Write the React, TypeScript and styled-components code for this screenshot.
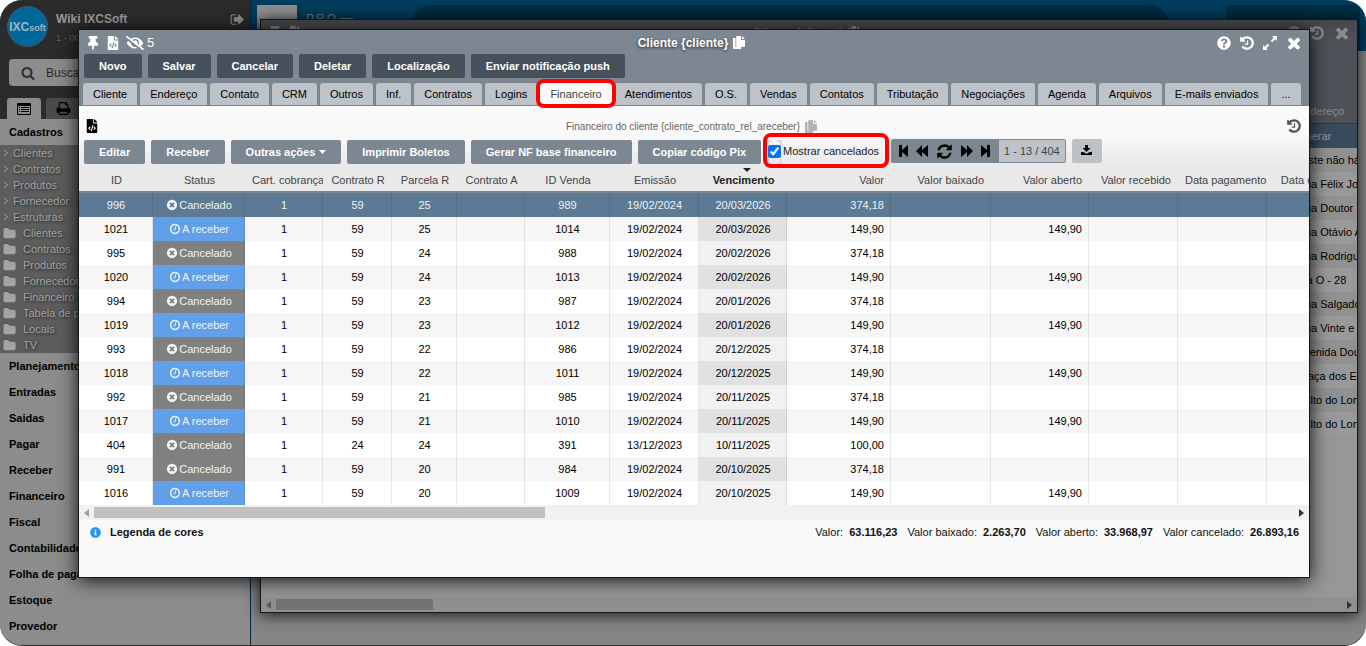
import React from "react";
import styled, { createGlobalStyle, css } from "styled-components";
import {
  FaThumbtack,
  FaFileCode,
  FaEyeSlash,
  FaQuestionCircle,
  FaInfoCircle,
} from "react-icons/fa";

const Global = createGlobalStyle`
  *, *::before, *::after { box-sizing: border-box; }
  html, body, #root { height: 100%; }
  body {
    margin: 0;
    background: #fff;
    font-family: "Liberation Sans", Arial, sans-serif;
    font-size: 11px;
    overflow: hidden;
  }
  button, input { font: inherit; color: inherit; }
  button { border: 0; padding: 0; background: none; cursor: pointer; }
  ul { list-style: none; margin: 0; padding: 0; }
  svg { display: block; flex: none; }
`;

/* ---------- icons ---------- */

const paths = {
  times:
    "M1490 1322q0 40-28 68l-136 136q-28 28-68 28t-68-28l-294-294-294 294q-28 28-68 28t-68-28l-136-136q-28-28-28-68t28-68l294-294-294-294q-28-28-28-68t28-68l136-136q28-28 68-28t68 28l294 294 294-294q28-28 68-28t68 28l136 136q28 28 28 68t-28 68l-294 294 294 294q28 28 28 68z",
  timesCircle:
    "M1277 1122q0-26-19-45l-181-181 181-181q19-19 19-45 0-27-19-46l-90-90q-19-19-46-19-26 0-45 19l-181 181-181-181q-19-19-45-19-27 0-46 19l-90 90q-19 19-19 46 0 26 19 45l181 181-181 181q-19 19-19 45 0 27 19 46l90 90q19 19 46 19 26 0 45-19l181-181 181 181q19 19 45 19 27 0 46-19l90-90q19-19 19-46zm387-226q0 209-103 385.5t-279.5 279.5-385.5 103-385.5-103-279.5-279.5-103-385.5 103-385.5 279.5-279.5 385.5-103 385.5 103 279.5 279.5 103 385.5z",
  clock:
    "M1024 544v448q0 14-9 23t-23 9h-320q-14 0-23-9t-9-23v-64q0-14 9-23t23-9h224v-352q0-14 9-23t23-9h64q14 0 23 9t9 23zm416 352q0-148-73-273t-198-198-273-73-273 73-198 198-73 273 73 273 198 198 273 73 273-73 198-198 73-273zm224 0q0 209-103 385.5t-279.5 279.5-385.5 103-385.5-103-279.5-279.5-103-385.5 103-385.5 279.5-279.5 385.5-103 385.5 103 279.5 279.5 103 385.5z",
  history:
    "M1664 896q0 156-61 298t-164 245-245 164-298 61q-172 0-327-72.5t-264-204.5q-7-10-6.5-22.5t8.5-20.5l137-138q10-9 25-9 16 2 23 12 73 95 179 147t225 52q104 0 198.5-40.5t163.5-109.5 109.5-163.5 40.5-198.5-40.5-198.5-109.5-163.5-163.5-109.5-198.5-40.5q-98 0-188 35.5t-160 101.5l137 138q31 30 14 69-17 40-59 40h-448q-26 0-45-19t-19-45v-448q0-42 40-59 39-17 69 14l130 129q107-101 244.5-156.5t284.5-55.5q156 0 298 61t245 164 164 245 61 298zm-640-288v448q0 14-9 23t-23 9h-320q-14 0-23-9t-9-23v-64q0-14 9-23t23-9h224v-352q0-14 9-23t23-9h64q14 0 23 9t9 23z",
  refresh:
    "M1639 1056q0 5-1 7-64 268-268 434.5t-478 166.5q-146 0-282.5-55t-243.5-157l-129 129q-19 19-45 19t-45-19-19-45v-448q0-26 19-45t45-19h448q26 0 45 19t19 45-19 45l-137 137q71 66 161 102t187 36q134 0 250-65t186-179q11-17 53-117 8-23 30-23h192q13 0 22.5 9.5t9.5 22.5zm25-800v448q0 26-19 45t-45 19h-448q-26 0-45-19t-19-45 19-45l138-138q-148-137-349-137-134 0-250 65t-186 179q-11 17-53 117-8 23-30 23h-199q-13 0-22.5-9.5t-9.5-22.5v-7q65-268 270-434.5t480-166.5q146 0 284 55.5t245 156.5l130-129q19-19 45-19t45 19 19 45z",
  print:
    "M448 1536h896v-256h-896v256zm0-640h896v-384h-160q-40 0-68-28t-28-68v-160h-640v640zm1152 64q0-26-19-45t-45-19-45 19-19 45 19 45 45 19 45-19 19-45zm128 0v416q0 13-9.5 22.5t-22.5 9.5h-224v160q0 40-28 68t-68 28h-960q-40 0-68-28t-28-68v-160h-224q-13 0-22.5-9.5t-9.5-22.5v-416q0-79 56.5-135.5t135.5-56.5h64v-544q0-40 28-68t68-28h672q40 0 88 20t76 48l152 152q28 28 48 76t20 88v256h64q79 0 135.5 56.5t56.5 135.5z",
  search:
    "M1216 832q0-185-131.5-316.5t-316.5-131.5-316.5 131.5-131.5 316.5 131.5 316.5 316.5 131.5 316.5-131.5 131.5-316.5zm512 832q0 52-38 90t-90 38q-54 0-90-38l-343-342q-179 124-399 124-143 0-273.5-55.5t-225-150-150-225-55.5-273.5 55.5-273.5 150-225 225-150 273.5-55.5 273.5 55.5 225 150 150 225 55.5 273.5q0 220-124 399l343 343q37 37 37 90z",
  folder:
    "M1728 608v704q0 92-66 158t-158 66h-1216q-92 0-158-66t-66-158v-960q0-92 66-158t158-66h320q92 0 158 66t66 158v32h672q92 0 158 66t66 158z",
  signOut:
    "M704 1440q0 4 1 20t.5 26.5-3 23.5-10 19.5-20.5 6.5h-320q-119 0-203.5-84.5t-84.5-203.5v-704q0-119 84.5-203.5t203.5-84.5h320q13 0 22.5 9.5t9.5 22.5q0 4 1 20t.5 26.5-3 23.5-10 19.5-20.5 6.5h-320q-66 0-113 47t-47 113v704q0 66 47 113t113 47h312l11.5 1 11.5 3 8 5.5 7 9 2 13.5zm928-544q0 26-19 45l-544 544q-19 19-45 19t-45-19-19-45v-288h-448q-26 0-45-19t-19-45v-384q0-26 19-45t45-19h448v-288q0-26 19-45t45-19 45 19l544 544q19 19 19 45z",
};

const Icon = ({ name, size = 14 }: { name: keyof typeof paths; size?: number }) => (
  <svg width={size} height={size} viewBox="0 0 1792 1792" fill="currentColor" aria-hidden>
    <path d={paths[name]} />
  </svg>
);

const ListIcon = () => (
  <svg width="14" height="12" viewBox="0 0 14 12" fill="currentColor" aria-hidden>
    <path fillRule="evenodd" d="M1 0h12a1 1 0 0 1 1 1v10a1 1 0 0 1-1 1H1a1 1 0 0 1-1-1V1a1 1 0 0 1 1-1zm0 3v8h12V3z" />
    <path d="M2 4h1v1H2zM4 4h8v1H4zM2 6h1v1H2zM4 6h8v1H4zM2 8h1v1H2zM4 8h8v1H4z" />
  </svg>
);

const ChevronIcon = () => (
  <svg width="6" height="8" viewBox="0 0 6 8" fill="none" stroke="currentColor" aria-hidden>
    <path d="M1 1l3.500 3L1 7" />
  </svg>
);

const CaretIcon = () => (
  <svg width="7" height="4" viewBox="0 0 7 4" fill="currentColor" aria-hidden>
    <path d="M0 0h7L3.500 4z" />
  </svg>
);

const ExpandIcon = () => (
  <svg width="14" height="14" viewBox="0 0 14 14" aria-hidden>
    <path d="M8.500 5.500 12 2M5.500 8.500 2 12" stroke="currentColor" strokeWidth="2" />
    <path d="M9 0h5v5zM0 9v5h5z" fill="currentColor" />
  </svg>
);

const PagesIcon = ({ size }: { size: number }) => (
  <svg width={size} height={size + 1} viewBox="0 0 12 13" fill="currentColor" aria-hidden>
    <path d="M0 2h2.500v9H8v2H1a1 1 0 0 1-1-1z" />
    <path d="M3.200 1a1 1 0 0 1 1-1H8v4h4v6a1 1 0 0 1-1 1H4.200a1 1 0 0 1-1-1zM9 0l3 3H9z" />
  </svg>
);

const StepIcon = ({ flip }: { flip?: boolean }) => (
  <svg width="10" height="12" viewBox="0 0 10 12" fill="currentColor" aria-hidden>
    {flip ? <path d="M0 0l6 5V0h3v12H6V7l-6 5z" /> : <path d="M10 0 4 5V0H1v12h3V7l6 5z" />}
  </svg>
);

const FastIcon = ({ flip }: { flip?: boolean }) => (
  <svg width="14" height="12" viewBox="0 0 14 12" fill="currentColor" aria-hidden>
    {flip ? <path d="M1 0l6 5V0l6 6-6 6V7l-6 5z" /> : <path d="M13 0 7 5V0L1 6l6 6V7l6 5z" />}
  </svg>
);

const DownloadIcon = () => (
  <svg width="11" height="10" viewBox="0 0 11 10" fill="currentColor" aria-hidden>
    <path d="M4 0h3v3h2.500L5.500 7 1.500 3H4z" />
    <path d="M0 7h2.500l3 2 3-2H11v3H0z" />
  </svg>
);

/* ---------- page shell and sidebar ---------- */

const Shell = styled.div`
  position: relative;
  display: flex;
  height: 100%;
  overflow: hidden;
  border-radius: 22px;
  border-bottom: 1px solid #2e2e2e;
  background: #858585;
`;

const Sidebar = styled.aside`
  flex: 0 0 251px;
  border-right: 1px solid #002b40;
  background: #8c8c8c;
  color: #000;
`;

const SideHeader = styled.header`
  display: flex;
  flex-direction: column;
  height: 119px;
  background: #2b2b2b;
`;

const UserRow = styled.div`
  display: flex;
  height: 54px;
  padding: 6px 5px 0 7px;
`;

const LogoBadge = styled.div`
  display: flex;
  align-items: center;
  justify-content: center;
  flex: none;
  width: 41px;
  height: 41px;
  margin-right: 8px;
  border: 1px solid #46545c;
  border-radius: 50%;
  background: #00679b;
  color: #a5b5bd;
  font-weight: 700;
`;

const LogoMain = styled.span`
  font-size: 12px;
`;

const LogoSmall = styled.span`
  padding-top: 3px;
  font-size: 9px;
`;

const UserText = styled.div`
  flex: 1;
  padding-top: 5px;
  color: #606060;
  font-size: 9px;
  line-height: 16px;
`;

const UserName = styled.div`
  margin-bottom: 3px;
  color: #9a9a9a;
  font-size: 12px;
  font-weight: 700;
`;

const LogoutButton = styled.button`
  align-self: flex-start;
  padding-top: 6px;
  color: #8c8c8c;
`;

const SearchBox = styled.label`
  display: flex;
  align-items: center;
  gap: 11px;
  height: 27px;
  margin: 5px 9px 12px;
  padding: 0 12px;
  border-radius: 4px;
  background: #8c8c8c;
  color: #2b2b2b;
`;

const SearchInput = styled.input`
  width: 100%;
  min-width: 0;
  padding: 0;
  border: 0;
  outline: 0;
  background: none;
  font-size: 12px;
  &::placeholder {
    color: #2b2b2b;
    opacity: 1;
  }
`;

const SideTabs = styled.div`
  display: flex;
  gap: 5px;
  padding-left: 7px;
`;

const SideTab = styled.button<{ $active?: boolean }>`
  display: flex;
  align-items: center;
  justify-content: center;
  width: 34px;
  height: 21px;
  border-radius: 3px 3px 0 0;
  background: ${(p) => (p.$active ? "#8c8c8c" : "#4b4b4b")};
  color: #000;
`;

const SectionTitle = styled.button`
  display: block;
  width: 100%;
  height: 26px;
  padding-left: 9px;
  font-weight: 700;
  text-align: left;
  white-space: nowrap;
`;

const SubList = styled.ul`
  background: #5d5d5d;
`;

const SubLink = styled.a<{ $folder?: boolean }>`
  display: flex;
  align-items: center;
  gap: ${(p) => (p.$folder ? "7px" : "4px")};
  height: 16px;
  padding-left: 3px;
  color: #a3a3a3;
  text-decoration: none;
  text-shadow: 1px 1px 3px #222;
`;

const Workspace = styled.div`
  flex: 1;
  min-width: 0;
`;

const TopBar = styled.div`
  display: flex;
  height: 51px;
  padding: 5px 6px 0 6px;
  background: #003d5c;
`;

const CompanyThumb = styled.div`
  width: 40px;
  background: #8f8f8f;
`;

const CompanyName = styled.div`
  display: flex;
  gap: 2px;
  width: 113px;
  padding: 7px 0 0 9px;
  color: #6b7c88;
  font-size: 12px;
`;

const NameDash = styled.span`
  width: 13px;
  height: 7px;
  margin-left: 2px;
  border-bottom: 1px solid currentColor;
`;

const TopPill = styled.div`
  flex: 1;
  border-radius: 22px 22px 0 0;
  background: #002d43;
`;

const TopPanel = styled.div`
  width: 134px;
  margin-left: 56px;
  border-radius: 5px 5px 0 0;
  background: #002d43;
`;

/* ---------- windows ---------- */

const WindowBox = styled.section<{ $back?: boolean }>`
  position: absolute;
  border: 1px solid #141618;
  overflow: hidden;
  ${(p) =>
    p.$back
      ? css`
          top: 19px;
          right: 8px;
          left: 260px;
          background: #979797;
          box-shadow: 0 2px 14px rgba(0, 0, 0, 0.8);
        `
      : css`
          top: 29px;
          right: 56px;
          left: 78px;
          background: #f9f9f9;
          box-shadow: 0 2px 18px rgba(0, 0, 0, 0.9);
        `}
`;

const BackHead = styled.div`
  height: 104px;
  border-bottom: 1px solid #33373b;
  background: linear-gradient(#45474b, #4e5258 20px);
  color: #8b8b8b;
`;

const BackHeadLabel = styled.div`
  width: 60px;
  margin-left: auto;
  padding-top: 61px;
`;

const TitleBar = styled.div<{ $dim?: boolean }>`
  display: grid;
  grid-template-columns: 1fr auto 1fr;
  align-items: center;
  height: 24px;
  padding: 1px 6px 0 7px;
  color: ${(p) => (p.$dim ? "#8b8b8b" : "#fff")};
`;

const TitleLeft = styled.div`
  display: flex;
  align-items: center;
  gap: 6px;
  font-size: 13px;
`;

const TitleText = styled.h1`
  display: flex;
  align-items: center;
  gap: 5px;
  margin: 0;
  padding-right: 6px;
  font-size: 12px;
  font-weight: 700;
  text-shadow: 0 1px 3px #222;
`;

const TitleRight = styled.div`
  display: flex;
  align-items: center;
  justify-content: flex-end;
  gap: 8px;
`;

const IconButton = styled.button`
  display: flex;
  align-items: center;
  justify-content: center;
  gap: 3px;
`;

const BackTable = styled.table`
  width: 100%;
  border-collapse: collapse;
  table-layout: fixed;
  td {
    height: 24px;
    padding: 0;
    overflow: hidden;
    white-space: nowrap;
  }
  td:last-child { width: 60px; }
  tr:nth-child(odd) { background: #999; }
  tr:nth-child(even) { background: #919191; }
  tr:first-child { background: #384b5d; color: #999; }
`;

const BackBody = styled.div`
  height: 473px;
`;

const WindowHead = styled.header`
  background: #7d8791;
`;

const ButtonRow = styled.div`
  display: flex;
  gap: 6px;
  padding: 0 5px 5px;
`;

const ActionButton = styled.button<{ $dark?: boolean }>`
  display: flex;
  align-items: center;
  gap: 4px;
  height: 24px;
  padding: 0 15px;
  border-radius: 2px;
  background: ${(p) => (p.$dark ? "#46505b" : "#7d8791")};
  color: #fff;
  font-weight: 700;
  white-space: nowrap;
`;

const TabRow = styled.nav`
  display: flex;
  gap: 3px;
  padding: 0 8px 0 4px;
  border-bottom: 1px solid #747f90;
`;

const Tab = styled.button<{ $active?: boolean }>`
  position: relative;
  height: 22px;
  padding: 0 10px;
  border-radius: 3px 3px 0 0;
  background: ${(p) => (p.$active ? "#f9f9f9" : "#bec2c9")};
  color: ${(p) => (p.$active ? "#444" : "#000")};
  white-space: nowrap;
`;

const Highlight = styled.span<{ $inset: string }>`
  position: absolute;
  z-index: 1;
  inset: ${(p) => p.$inset};
  border: 4px solid #f00;
  border-radius: 8px;
  pointer-events: none;
`;

const GridTop = styled.div`
  background: linear-gradient(#fafafa 25px, #e9e9e9 60px);
`;

const SubTitleBar = styled.div`
  display: grid;
  grid-template-columns: 1fr auto 1fr;
  align-items: center;
  height: 33px;
  padding: 7px 7px 0 6px;
`;

const SubTitle = styled.h2`
  display: flex;
  align-items: center;
  gap: 5px;
  margin: 0;
  padding-right: 4px;
  color: #666;
  font-size: 10px;
  font-weight: 400;
`;

const CopyMark = styled.span`
  color: #b4b4b4;
`;

const HistoryButton = styled.button`
  justify-self: end;
  color: #555;
`;

const Toolbar = styled.div`
  display: flex;
  gap: 5px;
  padding: 1px 5px 4px;
`;

const RecordActions = styled.div`
  display: flex;
  gap: 6px;
`;

const CheckLabel = styled.label`
  position: relative;
  display: flex;
  align-items: center;
  gap: 2px;
  padding: 0 7px 2px 2px;
  color: #222;
  white-space: nowrap;
`;

const FocusMarks = styled.svg`
  position: absolute;
  top: 0;
  left: 1px;
`;

const CheckInput = styled.input`
  position: relative;
  width: 13px;
  height: 13px;
  margin: 0;
  accent-color: #0075ff;
`;

const Pager = styled.div`
  display: flex;
  height: 24px;
  margin-top: -1px;
  border: 1px solid #7d8791;
  border-radius: 2px;
  background: #7d8791;
`;

const PagerButtons = styled.div`
  display: flex;
  align-items: center;
  gap: 7px;
  padding: 0 8px 0 6px;
  color: #000;
`;

const PageCount = styled.span`
  padding: 0 5px;
  background: #bec2c9;
  color: #444;
  line-height: 22px;
  white-space: nowrap;
`;

const DownloadButton = styled.button`
  display: flex;
  align-items: center;
  justify-content: center;
  width: 30px;
  height: 24px;
  margin: -1px 0 0 1px;
  padding-bottom: 3px;
  border-radius: 2px;
  background: #bdc2c6;
  color: #000;
`;

const TableClip = styled.div`
  overflow: hidden;
`;

const DataTable = styled.table`
  width: 100%;
  min-width: 1274px;
  border-collapse: separate;
  border-spacing: 0;
  table-layout: fixed;
`;

type Align = "left" | "center" | "right";

const headPadding = { left: "0 0 0 7px", center: "0 6px 0 7px", right: "0 7px" };

const HeadCell = styled.th<{ $align: Align; $sorted?: boolean }>`
  position: relative;
  height: 25px;
  padding: ${(p) => headPadding[p.$align]};
  overflow: hidden;
  border-bottom: 2px solid #7d8791;
  background: #e9e9e9;
  color: ${(p) => (p.$sorted ? "#222" : "#444")};
  font-weight: ${(p) => (p.$sorted ? 700 : 400)};
  text-align: ${(p) => p.$align};
  white-space: nowrap;
`;

const SortMark = styled.span`
  position: absolute;
  top: 0;
  left: 50%;
  border: 4px solid transparent;
  border-top-color: #222;
`;

const Row = styled.tr<{ $selected?: boolean }>`
  background: #fff;
  color: #000;
  &:nth-child(even) { background: #f6f6f6; }
  ${(p) =>
    p.$selected &&
    css`
      && { background: #5d7a95; }
      color: #eef2f6;
    `}
`;

const Cell = styled.td<{ $align: Align; $fill?: string }>`
  height: 24px;
  padding: 0 ${(p) => (p.$align === "right" ? "6px" : "5px")} 0 6px;
  border-right: 1px solid rgba(0, 0, 0, 0.09);
  text-align: ${(p) => p.$align};
  white-space: nowrap;
  ${(p) => p.$fill && css`background: ${p.$fill};`}
`;

const Status = styled.span`
  display: flex;
  align-items: center;
  justify-content: center;
  gap: 1px;
  color: #f2f2f2;
`;

const ScrollTrack = styled.div<{ $dim?: boolean }>`
  display: flex;
  align-items: center;
  height: 15px;
  padding: 0 5px;
  background: ${(p) => (p.$dim ? "#909090" : "#f1f1f1")};
  color: ${(p) => (p.$dim ? "#5a5a5a" : "#a0a0a0")};
`;

const ScrollThumb = styled.div<{ $dim?: boolean }>`
  width: ${(p) => (p.$dim ? "14.5%" : "37%")};
  height: 11px;
  margin: 0 auto 0 5px;
  background: ${(p) => (p.$dim ? "#737373" : "#c1c1c1")};
`;

const Arrow = styled.span<{ $left?: boolean }>`
  border: 4px solid transparent;
  ${(p) =>
    p.$left
      ? css`
          border-left-width: 0;
          border-right: 5px solid currentColor;
        `
      : css`
          border-right-width: 0;
          border-left: 5px solid #333;
        `}
`;

const WindowFoot = styled.footer`
  display: flex;
  justify-content: space-between;
  padding: 5px 10px 37px 11px;
  color: #111;
  line-height: 15px;
`;

const Legend = styled.div`
  display: flex;
  align-items: center;
  gap: 9px;
  font-weight: 700;
`;

const BlueMark = styled.span`
  color: #2196f3;
`;

const Totals = styled.div`
  display: flex;
  gap: 10px;
`;

const Total = styled.span`
  display: flex;
  gap: 6px;
`;

/* ---------- data ---------- */

const angleItems = ["Clientes", "Contratos", "Produtos", "Fornecedor", "Estruturas"];
const folderItems = ["Clientes", "Contratos", "Produtos", "Fornecedor", "Financeiro", "Tabela de preços", "Locais", "TV"];
const sections = ["Planejamento", "Entradas", "Saidas", "Pagar", "Receber", "Financeiro", "Fiscal", "Contabilidade", "Folha de pagamento", "Estoque", "Provedor"];

const addresses = ["Liberar", "Teste não há", "Rua Félix José", "Rua Doutor", "Rua Otávio Alves", "Rua Rodrigues", "Via O - 28", "Rua Salgado", "Rua Vinte e", "Avenida Doutor", "Praça dos Estados", "Salto do Lontra", "Salto do Lontra"];

const actions = ["Novo", "Salvar", "Cancelar", "Deletar", "Localização", "Enviar notificação push"];

const tabs = ["Cliente", "Endereço", "Contato", "CRM", "Outros", "Inf.", "Contratos", "Logins", "Financeiro", "Atendimentos", "O.S.", "Vendas", "Contatos", "Tributação", "Negociações", "Agenda", "Arquivos", "E-mails enviados", "..."];

const columns: { label: string; width: number; head?: Align; cell?: Align }[] = [
  { label: "ID", width: 74 },
  { label: "Status", width: 92 },
  { label: "Cart. cobrança", width: 78, head: "left" },
  { label: "Contrato R", width: 69 },
  { label: "Parcela R", width: 65 },
  { label: "Contrato A", width: 68 },
  { label: "ID Venda", width: 85 },
  { label: "Emissão", width: 89 },
  { label: "Vencimento", width: 88 },
  { label: "Valor", width: 104, head: "right", cell: "right" },
  { label: "Valor baixado", width: 100, head: "right", cell: "right" },
  { label: "Valor aberto", width: 98, head: "right", cell: "right" },
  { label: "Valor recebido", width: 89, head: "right", cell: "right" },
  { label: "Data pagamento", width: 89 },
  { label: "Data crédito", width: 86 },
];

type Entry = [id: string, open: boolean, contract: string, part: string, sale: string, issued: string, due: string, value: string];

const entries: Entry[] = [
  ["996", false, "59", "25", "989", "19/02/2024", "20/03/2026", "374,18"],
  ["1021", true, "59", "25", "1014", "19/02/2024", "20/03/2026", "149,90"],
  ["995", false, "59", "24", "988", "19/02/2024", "20/02/2026", "374,18"],
  ["1020", true, "59", "24", "1013", "19/02/2024", "20/02/2026", "149,90"],
  ["994", false, "59", "23", "987", "19/02/2024", "20/01/2026", "374,18"],
  ["1019", true, "59", "23", "1012", "19/02/2024", "20/01/2026", "149,90"],
  ["993", false, "59", "22", "986", "19/02/2024", "20/12/2025", "374,18"],
  ["1018", true, "59", "22", "1011", "19/02/2024", "20/12/2025", "149,90"],
  ["992", false, "59", "21", "985", "19/02/2024", "20/11/2025", "374,18"],
  ["1017", true, "59", "21", "1010", "19/02/2024", "20/11/2025", "149,90"],
  ["404", false, "24", "24", "391", "13/12/2023", "10/11/2025", "100,00"],
  ["991", false, "59", "20", "984", "19/02/2024", "20/10/2025", "374,18"],
  ["1016", true, "59", "20", "1009", "19/02/2024", "20/10/2025", "149,90"],
];

const totals = [
  ["Valor:", "63.116,23"],
  ["Valor baixado:", "2.263,70"],
  ["Valor aberto:", "33.968,97"],
  ["Valor cancelado:", "26.893,16"],
];

/* ---------- components ---------- */

const MainMenu = () => (
  <Sidebar>
    <SideHeader>
      <UserRow>
        <LogoBadge>
          <LogoMain>IXC</LogoMain>
          <LogoSmall>soft</LogoSmall>
        </LogoBadge>
        <UserText>
          <UserName>Wiki IXCSoft</UserName>
          1 - IXCSoft
        </UserText>
        <LogoutButton aria-label="Sair">
          <Icon name="signOut" size={15} />
        </LogoutButton>
      </UserRow>
      <SearchBox>
        <Icon name="search" size={14} />
        <SearchInput placeholder="Buscar" aria-label="Buscar" />
      </SearchBox>
      <SideTabs>
        <SideTab $active aria-label="Menu"><ListIcon /></SideTab>
        <SideTab aria-label="Relatórios"><Icon name="print" size={15} /></SideTab>
      </SideTabs>
    </SideHeader>
    <SectionTitle>Cadastros</SectionTitle>
    <SubList>
      {angleItems.map((t) => (
        <li key={t}><SubLink href="#"><ChevronIcon />{t}</SubLink></li>
      ))}
      {folderItems.map((t) => (
        <li key={t}><SubLink href="#" $folder><Icon name="folder" size={13} />{t}</SubLink></li>
      ))}
    </SubList>
    {sections.map((t) => <SectionTitle key={t}>{t}</SectionTitle>)}
  </Sidebar>
);

const BackWindow = () => (
  <WindowBox $back>
    <BackHead>
      <TitleBar $dim>
        <TitleLeft>
          <FaThumbtack size={14} />
          <FaFileCode size={14} />
        </TitleLeft>
        <TitleText>Cliente {"{cliente}"} <PagesIcon size={12} /></TitleText>
        <TitleRight>
          <FaQuestionCircle size={14} />
          <Icon name="history" size={16} />
          <Icon name="times" size={18} />
        </TitleRight>
      </TitleBar>
      <BackHeadLabel>Endereço</BackHeadLabel>
    </BackHead>
    <BackBody>
      <BackTable>
        <tbody>
          {addresses.map((a, i) => <tr key={i}><td /><td>{a}</td></tr>)}
        </tbody>
      </BackTable>
    </BackBody>
    <ScrollTrack $dim><Arrow $left /><ScrollThumb $dim /><Arrow /></ScrollTrack>
  </WindowBox>
);

const FinanceTable = () => (
  <TableClip>
    <DataTable>
      <colgroup>
        {columns.map((c) => <col key={c.label} width={c.width} />)}
      </colgroup>
      <thead>
        <tr>
          {columns.map((c) => (
            <HeadCell key={c.label} $align={c.head || "center"} $sorted={c.label === "Vencimento"}>
              {c.label === "Vencimento" && <SortMark />}
              {c.label}
            </HeadCell>
          ))}
        </tr>
      </thead>
      <tbody>
        {entries.map(([id, open, contract, part, sale, issued, due, value], r) => {
          const selected = r === 0;
          const cells: React.ReactNode[] = [
            id,
            <Status><Icon name={open ? "clock" : "timesCircle"} size={12} />{open ? "A receber" : "Cancelado"}</Status>,
            "1", contract, part, "", sale, issued, due, value, "", open ? value : "", "", "", "",
          ];
          return (
            <Row key={id} $selected={selected}>
              {cells.map((content, c) => {
                let fill: string | undefined;
                if (!selected && c === 1) fill = open ? "#629fe9" : "#808080";
                if (!selected && c === 8) fill = r % 2 ? "#e1e1e1" : "#f1f1f1";
                return (
                  <Cell key={c} $align={columns[c].cell || "center"} $fill={fill}>{content}</Cell>
                );
              })}
            </Row>
          );
        })}
      </tbody>
    </DataTable>
  </TableClip>
);

const ClientWindow = () => (
  <WindowBox>
    <WindowHead>
      <TitleBar>
        <TitleLeft>
          <IconButton aria-label="Fixar"><FaThumbtack size={14} /></IconButton>
          <IconButton aria-label="Código"><FaFileCode size={14} /></IconButton>
          <IconButton aria-label="Campos ocultos"><FaEyeSlash size={18} />5</IconButton>
        </TitleLeft>
        <TitleText>Cliente {"{cliente}"} <PagesIcon size={12} /></TitleText>
        <TitleRight>
          <IconButton aria-label="Ajuda"><FaQuestionCircle size={14} /></IconButton>
          <IconButton aria-label="Histórico"><Icon name="history" size={16} /></IconButton>
          <IconButton aria-label="Expandir"><ExpandIcon /></IconButton>
          <IconButton aria-label="Fechar"><Icon name="times" size={18} /></IconButton>
        </TitleRight>
      </TitleBar>
      <ButtonRow>
        {actions.map((a) => <ActionButton $dark key={a}>{a}</ActionButton>)}
      </ButtonRow>
      <TabRow>
        {tabs.map((t) => (
          <Tab key={t} $active={t === "Financeiro"}>
            {t}
            {t === "Financeiro" && <Highlight $inset="-4px -4px -3px" />}
          </Tab>
        ))}
      </TabRow>
    </WindowHead>
    <GridTop>
      <SubTitleBar>
        <FaFileCode size={14} />
        <SubTitle>
          Financeiro do cliente {"{cliente_contrato_rel_areceber}"}
          <CopyMark><PagesIcon size={12} /></CopyMark>
        </SubTitle>
        <HistoryButton aria-label="Histórico do registro"><Icon name="history" size={16} /></HistoryButton>
      </SubTitleBar>
      <Toolbar>
        <RecordActions>
          <ActionButton>Editar</ActionButton>
          <ActionButton>Receber</ActionButton>
          <ActionButton>Outras ações <CaretIcon /></ActionButton>
          <ActionButton>Imprimir Boletos</ActionButton>
          <ActionButton>Gerar NF base financeiro</ActionButton>
          <ActionButton>Copiar código Pix</ActionButton>
        </RecordActions>
        <CheckLabel>
          <FocusMarks width="15" height="24" viewBox="0 0 15 24" fill="none" stroke="#d3dae0" strokeWidth="2" aria-hidden>
            <path d="M1 5V1h4M10 1h4v4M1 19v4h4M10 23h4v-4" />
          </FocusMarks>
          <CheckInput type="checkbox" defaultChecked />
          Mostrar cancelados
          <Highlight $inset="-7px -3px -4px" />
        </CheckLabel>
        <Pager>
          <PagerButtons>
            <IconButton aria-label="Primeira página"><StepIcon /></IconButton>
            <IconButton aria-label="Página anterior"><FastIcon /></IconButton>
            <IconButton aria-label="Atualizar"><Icon name="refresh" size={17} /></IconButton>
            <IconButton aria-label="Próxima página"><FastIcon flip /></IconButton>
            <IconButton aria-label="Última página"><StepIcon flip /></IconButton>
          </PagerButtons>
          <PageCount>1 - 13 / 404</PageCount>
        </Pager>
        <DownloadButton aria-label="Exportar"><DownloadIcon /></DownloadButton>
      </Toolbar>
    </GridTop>
    <FinanceTable />
    <ScrollTrack><Arrow $left /><ScrollThumb /><Arrow /></ScrollTrack>
    <WindowFoot>
      <Legend><BlueMark><FaInfoCircle size={11} /></BlueMark>Legenda de cores</Legend>
      <Totals>
        {totals.map(([label, value]) => (
          <Total key={label}>{label} <b>{value}</b></Total>
        ))}
      </Totals>
    </WindowFoot>
  </WindowBox>
);

export default function App() {
  return (
    <>
      <Global />
      <Shell>
        <MainMenu />
        <Workspace>
          <TopBar>
            <CompanyThumb />
            <CompanyName><span>P</span><span>R</span><span>O</span><NameDash /></CompanyName>
            <TopPill />
            <TopPanel />
          </TopBar>
        </Workspace>
        <BackWindow />
        <ClientWindow />
      </Shell>
    </>
  );
}
